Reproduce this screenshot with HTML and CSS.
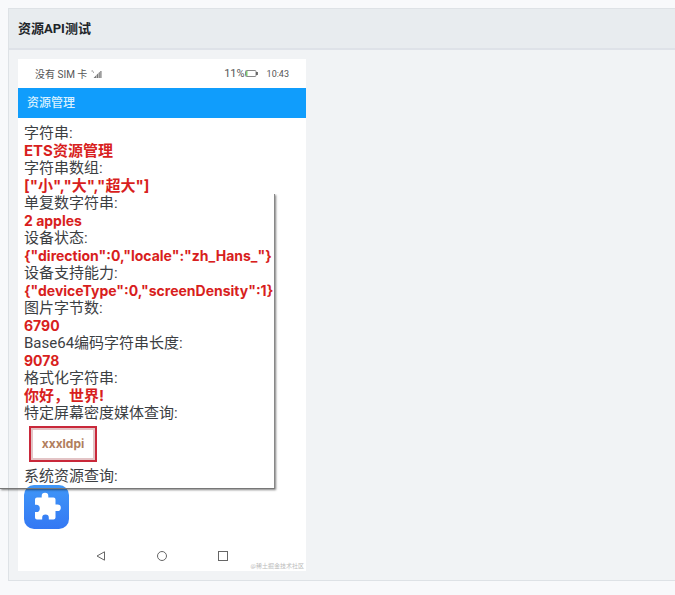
FILE: index.html
```html
<!DOCTYPE html>
<html lang="zh-CN">
<head>
    <meta charset="UTF-8">
    <meta name="viewport" content="width=device-width, initial-scale=1.0">
    <title>资源API测试</title>
    <link rel="stylesheet" href="styles.css">
</head>
<body>
    <table class="demo-table">
        <thead>
            <tr>
                <th>资源API测试</th>
            </tr>
        </thead>
        <tbody>
            <tr>
                <td>
                    <div class="phone">
                        <div class="status-bar">
                            <span>没有 SIM 卡</span>
                            <svg class="signal" width="11" height="8" viewBox="0 0 11 8">
                                <path d="M0.500 1h1.500M2 2.200h1" stroke="#888" stroke-width="1"/>
                                <path d="M2.500 8L5 5.500V8zM5.500 5l1.500-1.500V8H5.500zM7.500 3l1.300-1.300V8H7.500zM9.300 1h1.200v7H9.300z" fill="#777"/>
                            </svg>
                            <span class="battery-level">11%</span>
                            <svg class="battery" width="13" height="7" viewBox="0 0 13 7">
                                <rect x="0.500" y="0.500" width="10.500" height="6" rx="1" fill="none" stroke="#888"/>
                                <rect x="1" y="1" width="1.500" height="5" fill="#7ccb74"/>
                                <path d="M12 2v3" stroke="#444" stroke-width="1.500"/>
                            </svg>
                            <time class="clock">10:43</time>
                        </div>
                        <div class="title-bar">资源管理</div>
                        <div class="content">
                            <dl class="results">
                                <dt>字符串:</dt>
                                <dd>ETS资源管理</dd>
                                <dt>字符串数组:</dt>
                                <dd>["小","大","超大"]</dd>
                                <dt>单复数字符串:</dt>
                                <dd class="latin">2 apples</dd>
                                <dt>设备状态:</dt>
                                <dd class="latin">{"direction":0,"locale":"zh_Hans_"}</dd>
                                <dt>设备支持能力:</dt>
                                <dd class="latin">{"deviceType":0,"screenDensity":1}</dd>
                                <dt>图片字节数:</dt>
                                <dd class="latin">6790</dd>
                                <dt>Base64编码字符串长度:</dt>
                                <dd class="latin">9078</dd>
                                <dt>格式化字符串:</dt>
                                <dd>你好，世界!</dd>
                                <dt>特定屏幕密度媒体查询:</dt>
                                <dd class="media"><span class="dpi">xxxldpi</span></dd>
                                <dt>系统资源查询:</dt>
                                <dd>
                                    <svg class="app-icon" width="45" height="45" viewBox="0 0 45 45">
                                        <defs>
                                            <linearGradient id="app-bg" x1="0" y1="0" x2="0" y2="1">
                                                <stop offset="0" stop-color="#3f97f8"/>
                                                <stop offset="1" stop-color="#3478f3"/>
                                            </linearGradient>
                                        </defs>
                                        <rect width="45" height="44" rx="10" fill="url(#app-bg)"/>
                                        <path d="M13 12.500h4.700v-1.500a3.300 3.300 0 0 1 6.600 0v1.500h5.200a2 2 0 0 1 2 2v5h2a3.300 3.300 0 0 1 0 6.600h-2v6.400a2 2 0 0 1-2 2h-4.700v-1.700a3.300 3.300 0 0 0-6.600 0v1.700h-5.200a2 2 0 0 1-2-2v-5.500h1.200a3.600 3.600 0 0 0 0-7.200h-1.200v-5.300a2 2 0 0 1 2-2z" fill="#fff"/>
                                    </svg>
                                </dd>
                            </dl>
                        </div>
                        <div class="nav-bar">
                            <svg width="10" height="10" viewBox="0 0 10 10"><path d="M8.500 0.800v8.400L1 5z"/></svg>
                            <svg width="10" height="10" viewBox="0 0 10 10"><circle cx="5" cy="5" r="4.500"/></svg>
                            <svg width="10" height="10" viewBox="0 0 10 10"><rect x="0.500" y="0.500" width="9" height="9"/></svg>
                        </div>
                        <small class="watermark">@稀土掘金技术社区</small>
                    </div>
                </td>
            </tr>
        </tbody>
    </table>
    <div class="overlay-frame"></div>
</body>
</html>
```

FILE: styles.css
```css
* {
    margin: 0;
    padding: 0;
    box-sizing: border-box;
}

body {
    position: relative;
    padding: 8px 0 8px 8px;
    background: #f8f9fb;
    color: #212529;
    font-family: Roboto, "Noto Sans CJK SC", sans-serif;
}

.demo-table {
    width: 100%;
    border: 1px solid #dee2e6;
    border-right: none;
    border-spacing: 0;
    background: #f1f3f5;
}

.demo-table th {
    padding: 9px;
    border-bottom: 2px solid #dee2e8;
    background: #e8ecef;
    font-size: 13px;
    font-weight: 700;
    line-height: 21px;
    text-align: left;
}

.demo-table td {
    padding: 9px;
}

/* phone screen */
.phone {
    position: relative;
    width: 288px;
    background: #fff;
    color: #3c4043;
}

.status-bar {
    display: flex;
    align-items: center;
    height: 29px;
    padding: 0 17px;
    color: #555;
    font-size: 10px;
}

.signal {
    margin-left: 4px;
}

.battery-level {
    margin-left: auto;
    font-size: 11px;
}

.clock {
    margin-left: 9px;
    font-size: 9px;
}

.title-bar {
    padding: 0 9px;
    background: #109dfc;
    color: #d8f0ff;
    font-size: 12px;
    font-weight: 500;
    line-height: 30px;
}

.content {
    padding: 6px 6px 5px;
}

.results {
    font-size: 15px;
    white-space: nowrap;
}

.results dt {
    line-height: 18px;
}

.results dd {
    color: #d81e20;
    font-family: Inter, "Noto Sans CJK SC", sans-serif;
    font-weight: 700;
    line-height: 17px;
}

.results .latin {
    font-size: 14px;
}

.results .media {
    padding: 4px 5px 5px;
}

.dpi {
    display: inline-block;
    padding: 6px;
    border: 2px solid #c9283a;
    box-shadow: inset 0 0 0 2px #e3c4c6;
    width: 68px;
    height: 36px;
    color: #b17e5e;
    font-size: 12px;
    line-height: 20px;
    text-align: center;
}

.app-icon {
    display: block;
}

.nav-bar {
    display: flex;
    justify-content: center;
    gap: 51px;
    padding: 16px 0 10px;
}

.nav-bar svg {
    fill: none;
    stroke: #666;
}

.watermark {
    position: absolute;
    right: 2px;
    bottom: 1px;
    color: #bbb;
    font-size: 6px;
    line-height: 9px;
}

/* frame lying over the lower part of the screen */
.overlay-frame {
    position: absolute;
    top: 194px;
    left: 0;
    width: 275px;
    height: 295px;
    border-right: 1px solid #888;
    border-bottom: 1px solid #777;
    box-shadow: 1px 1px 2px rgba(0, 0, 0, 0.5);
    clip-path: inset(0 -4px -4px 0);
}
```
